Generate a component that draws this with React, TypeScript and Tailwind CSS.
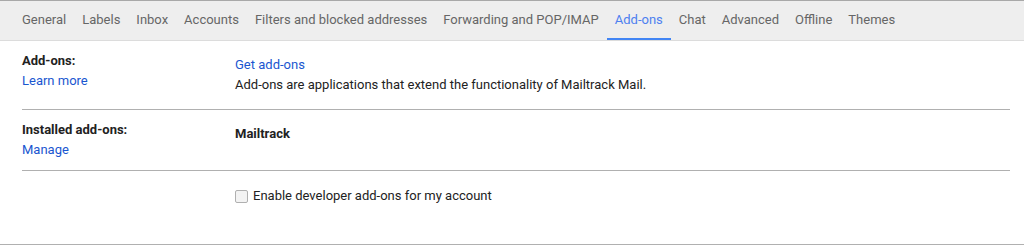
const tabs = [
  "General",
  "Labels",
  "Inbox",
  "Accounts",
  "Filters and blocked addresses",
  "Forwarding and POP/IMAP",
  "Add-ons",
  "Chat",
  "Advanced",
  "Offline",
  "Themes",
]

function TabBar({ active }: { active: string }) {
  return (
    <div className="flex h-[41px] border-t border-[#a8a8a8] border-b border-b-[#dcdcdc] bg-[#eeeeee] pl-[14px]">
      {tabs.map(tab => (
        <div
          key={tab}
          className={`flex items-center px-[8px] text-[13px] border-b-2 ${
            tab === active
              ? "border-[#4285f4] text-[#4d80f0]"
              : "border-transparent text-[#666666]"
          }`}
        >
          {tab}
        </div>
      ))}
    </div>
  )
}

export default function App() {
  return (
    <div
      className="w-[1024px] h-[245px] bg-white text-[13px] leading-[20px] text-[#222222]"
      style={{ fontFamily: "Roboto, 'Liberation Sans', sans-serif" }}
    >
      <TabBar active="Add-ons" />
      <div className="px-[22px]">
        <div className="flex border-b border-[#b0b0b0] pt-[10px] pb-[14px] w-[988px]">
          <div className="w-[213px] flex flex-col">
            <span className="font-bold">Add-ons:</span>
            <a className="text-[#1a56d0] cursor-pointer">Learn more</a>
          </div>
          <div className="flex flex-col pt-[4px]">
            <a className="text-[#1a56d0] cursor-pointer">Get add-ons</a>
            <span>
              Add-ons are applications that extend the functionality of Mailtrack
              Mail.
            </span>
          </div>
        </div>
        <div className="flex border-b border-[#b0b0b0] pt-[10px] pb-[10px] w-[988px]">
          <div className="w-[213px] flex flex-col">
            <span className="font-bold">Installed add-ons:</span>
            <a className="text-[#1a56d0] cursor-pointer">Manage</a>
          </div>
          <div className="pt-[4px]">
            <span className="font-bold">Mailtrack</span>
          </div>
        </div>
      </div>
      <div className="border-b border-[#b0b0b0] h-[74px] pl-[235px] pt-[15px]">
        <label className="flex items-center gap-[5px]">
          <span className="w-[13px] h-[13px] rounded-[2px] border border-[#b0b0b0] bg-[#f3f3f3]" />
          <span>Enable developer add-ons for my account</span>
        </label>
      </div>
    </div>
  )
}
